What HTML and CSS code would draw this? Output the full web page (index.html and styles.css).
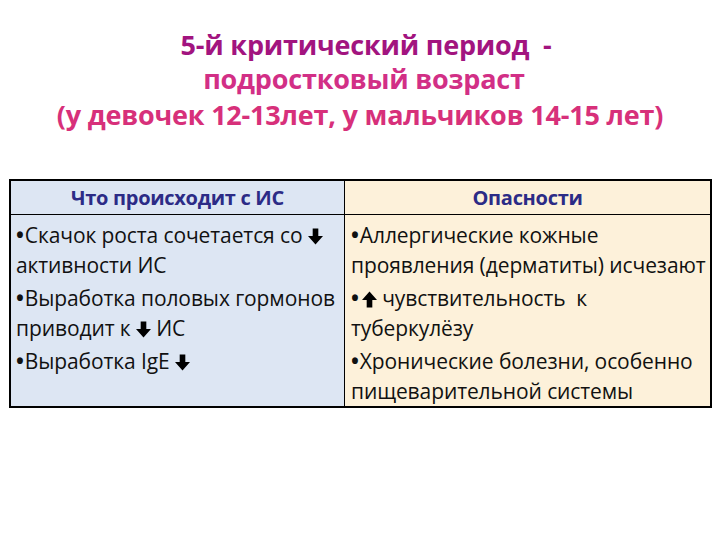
FILE: index.html
```html
<!DOCTYPE html>
<html lang="ru">
<head>
<meta charset="utf-8">
<link rel="stylesheet" href="styles.css">
</head>
<body>
<div class="title">
  <div class="t1">5-й критический период&nbsp; -</div>
  <div class="t2">подростковый возраст</div>
  <div class="t3">(у девочек 12-13лет, у мальчиков 14-15 лет)</div>
</div>
<div class="table">
  <div class="head left">Что происходит с ИС</div>
  <div class="head right">Опасности</div>
  <div class="cell left">
    <p><span class="b">•</span>Скачок роста сочетается со <svg class="arr" viewBox="0 0 16 17"><path d="M5 0H11V8H16L8 17L0 8H5Z"/></svg><br>активности ИС</p>
    <p><span class="b">•</span>Выработка половых гормонов<br>приводит к <svg class="arr" viewBox="0 0 16 17"><path d="M5 0H11V8H16L8 17L0 8H5Z"/></svg> ИС</p>
    <p><span class="b">•</span>Выработка IgE <svg class="arr" viewBox="0 0 16 17"><path d="M5 0H11V8H16L8 17L0 8H5Z"/></svg></p>
  </div>
  <div class="cell right">
    <p><span class="b">•</span>Аллергические кожные<br>проявления (дерматиты) исчезают</p>
    <p><span class="b">•</span><svg class="arr up" viewBox="0 0 16 17"><path d="M5 17H11V9H16L8 0L0 9H5Z"/></svg> чувствительность&nbsp; к<br>туберкулёзу</p>
    <p><span class="b">•</span>Хронические болезни, особенно<br>пищеварительной системы</p>
  </div>
</div>
</body>
</html>
```
FILE: styles.css
```css
html, body {
  margin: 0;
  padding: 0;
  background: #ffffff;
}
body {
  width: 720px;
  height: 540px;
  overflow: hidden;
  font-family: "Open Sans", "Noto Sans", sans-serif;
}
.title {
  padding-top: 28px;
  text-align: center;
  font-weight: 700;
  font-size: 27px;
  line-height: 34px;
  letter-spacing: -0.2px;
}
.t1 { color: #a2147f; padding-left: 12px; }
.t2 { color: #d22f86; padding-left: 8px; }
.t3 { color: #d7307a; margin-top: 2px; }
.table {
  margin: 47px 0 0 9px;
  width: 703px;
  display: grid;
  grid-template-columns: 334px 1fr;
  border: 2px solid #000;
  box-sizing: border-box;
}
.left { background: #dde6f3; border-right: 1px solid #000; }
.right { background: #fdf1da; }
.head {
  height: 33px;
  display: flex;
  align-items: center;
  justify-content: center;
  font-weight: 700;
  font-size: 20px;
  color: #2c2b86;
  border-bottom: 1px solid #000;
  letter-spacing: -0.3px;
}
.cell {
  padding: 5px 2px 0 5px;
  font-size: 21px;
  line-height: 30px;
  color: #111;
  letter-spacing: -0.1px;
}
.cell.right { padding-left: 6px; }
.cell p { margin: 0 0 3px 0; }
.cell p:last-child { margin-bottom: 0; }
.b {
  font-weight: 700;
  margin-right: 1px;
}
.arr {
  width: 15px;
  height: 17px;
  vertical-align: -2px;
  fill: #000;
}
.arr.up { margin-left: 2px; }
```
